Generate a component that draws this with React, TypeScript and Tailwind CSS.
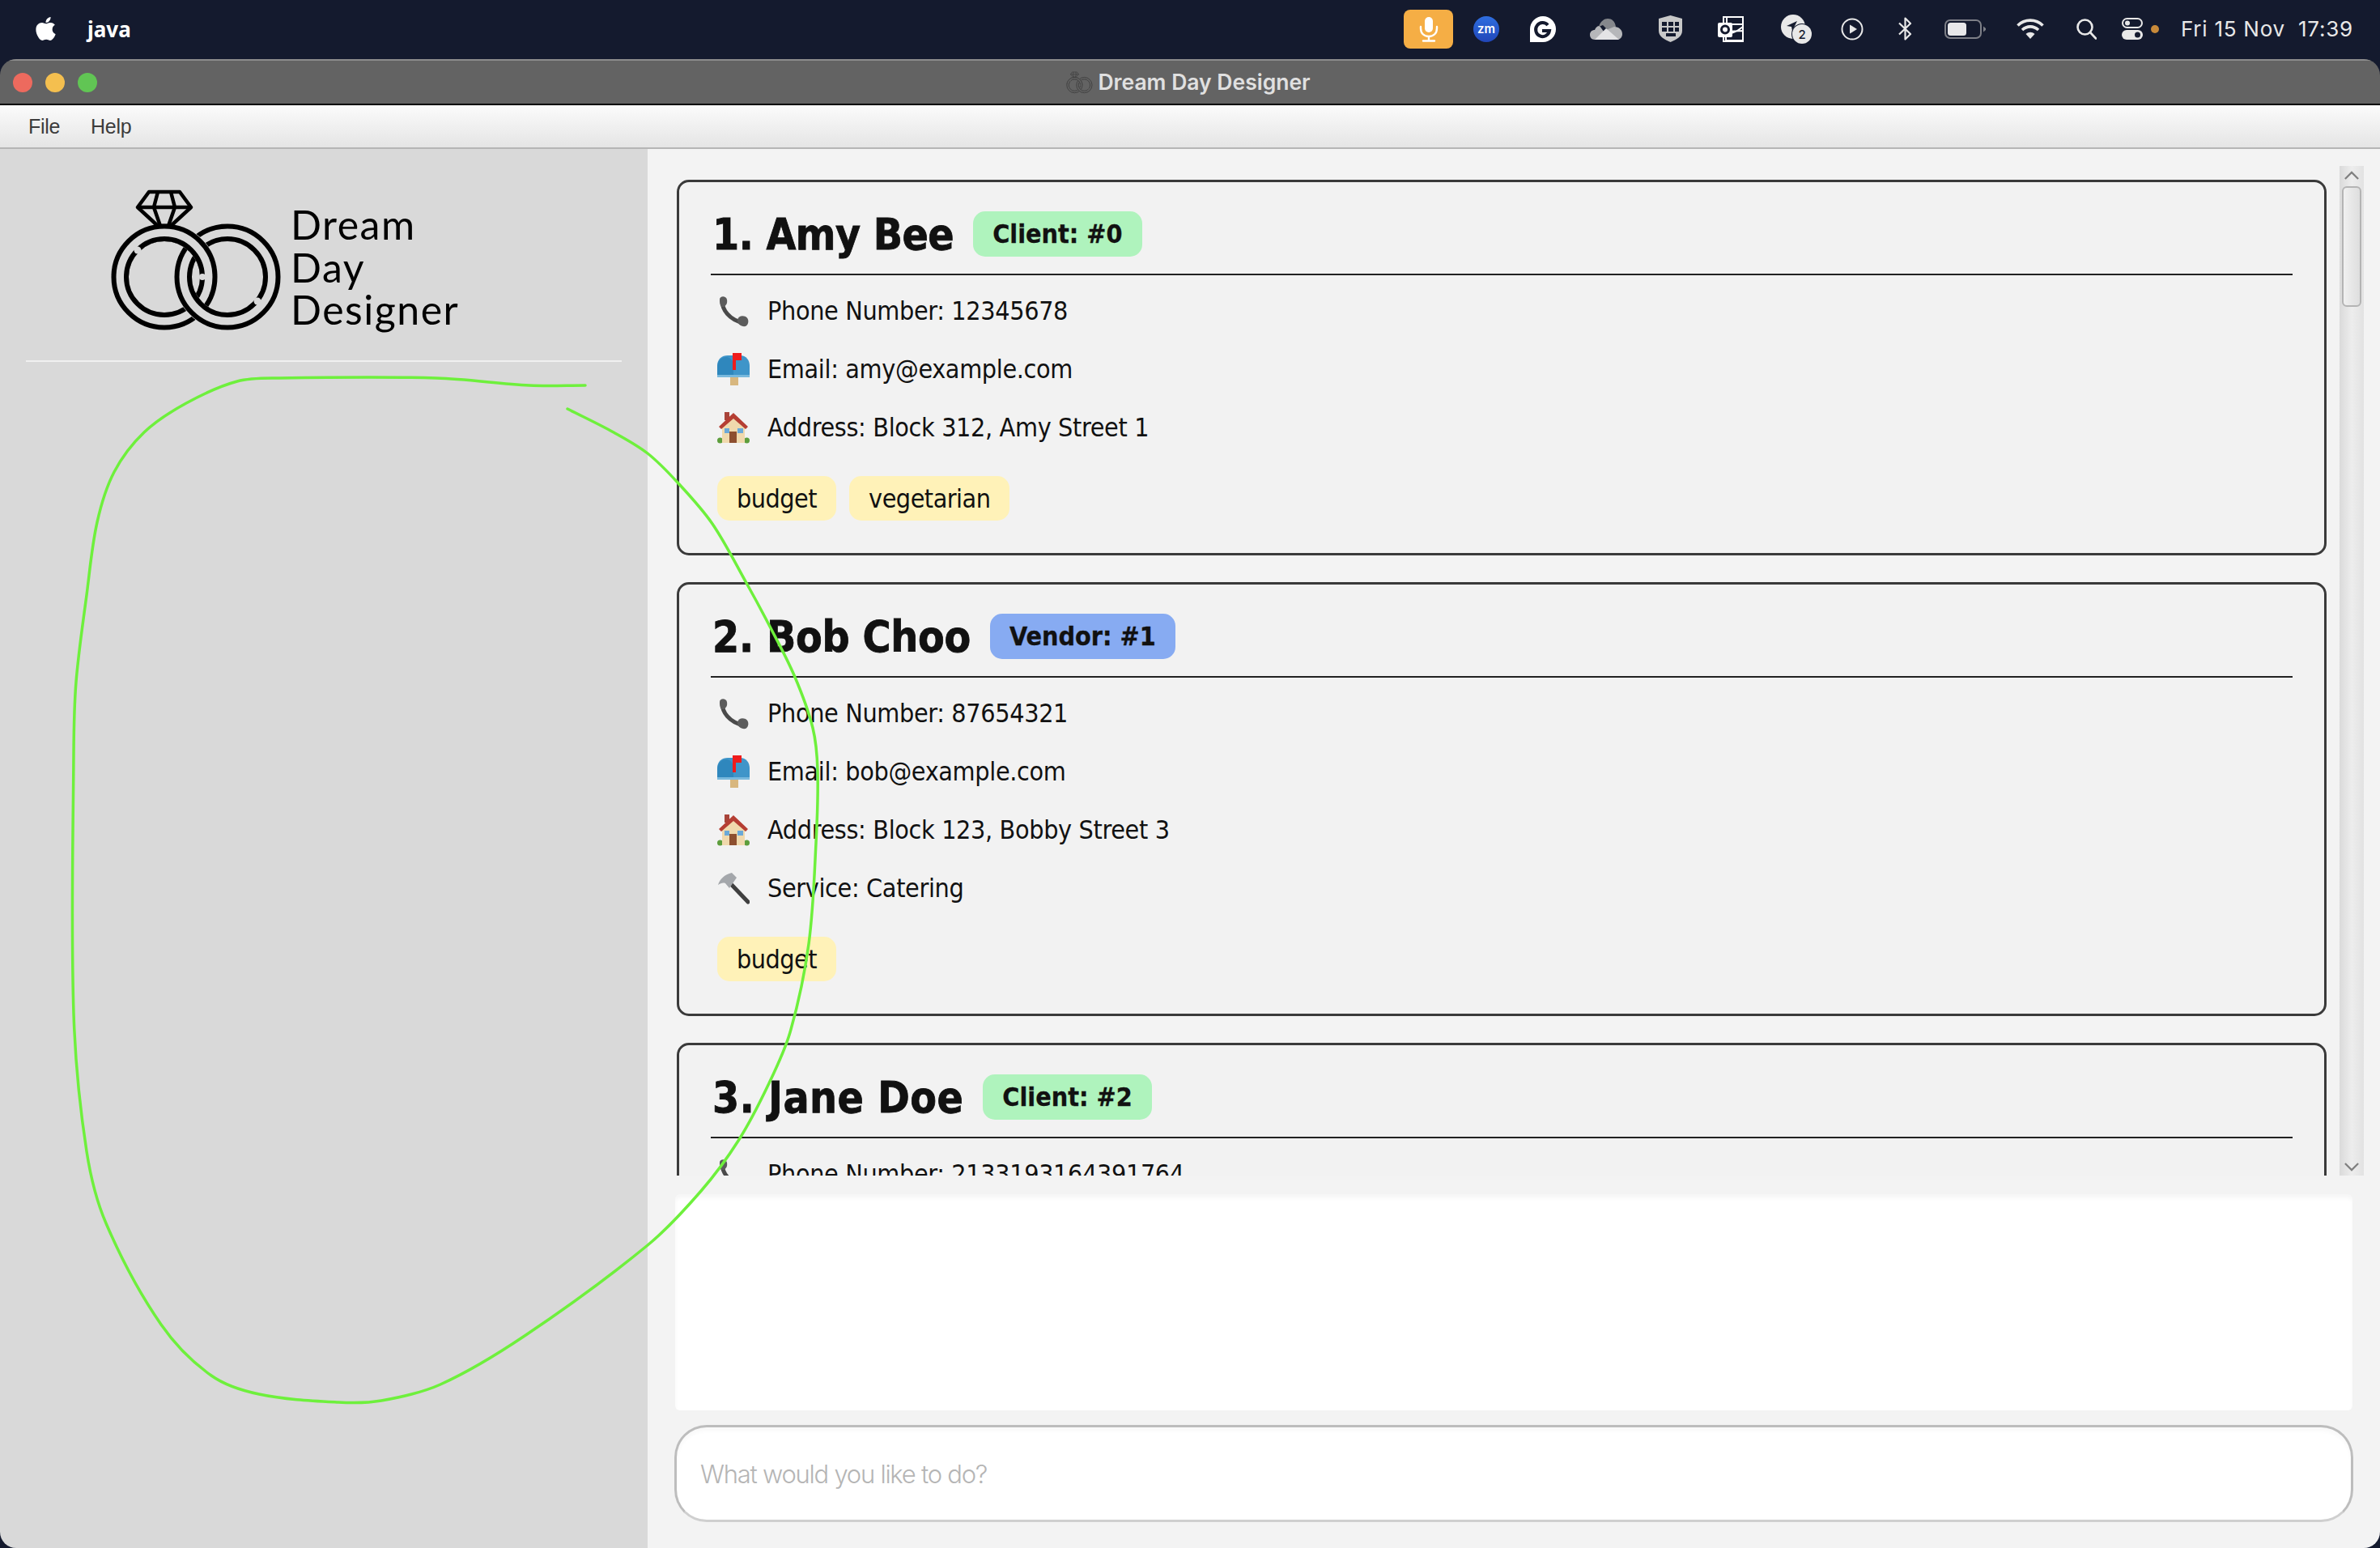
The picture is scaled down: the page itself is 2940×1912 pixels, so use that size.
import React from "react";
import { FaApple } from "react-icons/fa";

const CURVE: [number, number][] = [
  [723, 476], [654, 476], [539, 467], [345, 467], [293, 471], [230, 498], [178, 534], [141, 583], [120, 645],
  [107, 735], [94, 842], [91, 931], [91, 1252], [107, 1422], [131, 1511], [199, 1636], [261, 1699], [320, 1722],
  [418, 1732], [471, 1730], [544, 1710], [648, 1650], [800, 1538], [866, 1471], [912, 1409], [949, 1340],
  [976, 1275], [999, 1166], [1008, 1041], [1010, 952], [1004, 899], [981, 834], [949, 770], [922, 720],
  [880, 647], [838, 597], [800, 560], [758, 534], [701, 505],
];

function smooth(p: [number, number][]) {
  const dist = (a: [number, number], b: [number, number]) => Math.hypot(a[0] - b[0], a[1] - b[1]);
  const tangent = (i: number): [number, number] => {
    const a = p[Math.max(i - 1, 0)], c = p[Math.min(i + 1, p.length - 1)];
    const l = dist(a, c) || 1;
    return [(c[0] - a[0]) / l, (c[1] - a[1]) / l];
  };
  let d = `M${p[0][0]} ${p[0][1]}`;
  for (let i = 0; i < p.length - 1; i++) {
    const b = p[i], c = p[i + 1];
    const s = dist(b, c) / 3;
    const t0 = tangent(i), t1 = tangent(i + 1);
    d += ` C${b[0] + t0[0] * s} ${b[1] + t0[1] * s} ${c[0] - t1[0] * s} ${c[1] - t1[1] * s} ${c[0]} ${c[1]}`;
  }
  return d;
}

function RingLogo({ className, bg = "#d9d9d9", ink = "#000" }: { className: string; bg?: string; ink?: string }) {
  const ring = (cx: number) => (
    <>
      <circle cx={cx} cy={110} r={55} fill="none" stroke={bg} strokeWidth={22} />
      <circle cx={cx} cy={110} r={62.5} fill="none" stroke={ink} strokeWidth={6} />
      <circle cx={cx} cy={110} r={47} fill="none" stroke={ink} strokeWidth={6} />
    </>
  );
  return (
    <svg viewBox="0 0 215 180" className={className}>
      <defs>
        <clipPath id={`top-${ink.slice(1)}`}><rect x="0" y="0" width="215" height="108" /></clipPath>
      </defs>
      {ring(68)}
      {ring(146)}
      <g clipPath={`url(#top-${ink.slice(1)})`}>{ring(68)}</g>
      <circle cx="35" cy="77" r="4.5" fill={bg} />
      <circle cx="115" cy="110" r="4" fill={bg} />
      <circle cx="183" cy="140" r="4.5" fill={bg} />
      <g fill="none" stroke={ink} strokeWidth="4.5" strokeLinejoin="round">
        <path d="M49 5H87L101 24L76 47H60L35 24Z" />
        <path d="M35 24H101M60 5L55 24L63 47M76 5L81 24L73 47" />
      </g>
    </svg>
  );
}

function PhoneEmoji() {
  return (
    <svg viewBox="0 0 40 40" className="w-[40px] h-[40px] blur-[0.6px]">
      <path d="M6 7C6 18 14 31 33 35" fill="none" stroke="#4a4a4a" strokeWidth="5" />
      <path d="M3 6C3 1 11 1 12 6C13 12 10 13 9 15L5 15C3 12 3 9 3 6Z" fill="#5c5c5c" />
      <path d="M25 31C26 27 30 25 35 27C40 30 39 37 35 39C30 40 24 36 25 31Z" fill="#5c5c5c" />
    </svg>
  );
}
function MailEmoji() {
  return (
    <svg viewBox="0 0 40 40" className="w-[40px] h-[40px] blur-[0.5px]">
      <rect x="16" y="30" width="10" height="10" fill="#d8b77f" />
      <path d="M0 30V16C0 7 6 3 13 3H28C36 3 40 9 40 16V30Z" fill="#3f95c9" />
      <path d="M0 30V18C0 9 6 5 11 5C17 5 20 10 20 18V30Z" fill="#2f87bd" />
      <rect x="0" y="27" width="40" height="3" fill="#79b9dd" />
      <path d="M19 0H30V9H23V21H19Z" fill="#ef1c1c" />
    </svg>
  );
}
function HouseEmoji() {
  return (
    <svg viewBox="0 0 40 40" className="w-[40px] h-[40px] blur-[0.4px]">
      <rect x="9" y="1" width="6" height="10" fill="#a8443a" />
      <circle cx="3.500" cy="36" r="3.500" fill="#5d9e3c" />
      <circle cx="36.500" cy="36" r="3.500" fill="#5d9e3c" />
      <path d="M6 39V17L20 6L34 17V39Z" fill="#f0d9ad" />
      <path d="M2 19L20 2L38 19L35 22L20 9L5 22Z" fill="#b53e33" />
      <rect x="15" y="25" width="9" height="14" fill="#8d4f2f" />
      <rect x="9" y="21" width="6" height="6" fill="#6ba9d8" />
      <rect x="25" y="21" width="7" height="6" fill="#6ba9d8" />
    </svg>
  );
}
function HammerEmoji() {
  return (
    <svg viewBox="0 0 40 40" className="w-[40px] h-[40px] blur-[0.4px]">
      <path d="M17 15L38 37" fill="none" stroke="#3f3f3f" strokeWidth="5" strokeLinecap="round" />
      <path d="M1 16C3 9 9 3 18 1L24 7L15 20L10 14C7 13 4 14 1 16Z" fill="#a4a7ab" />
    </svg>
  );
}

function Row({ icon, text }: { icon: React.ReactNode; text: string }) {
  return (
    <div className="h-[72px] flex items-center pl-[8px]">
      <div className="w-[40px] h-[40px] shrink-0">{icon}</div>
      <span className="ml-[22px] text-[32px] tracking-[-0.35px] leading-none text-[#111]">{text}</span>
    </div>
  );
}

function Tag({ children }: { children: string }) {
  return (
    <span className="h-[55px] px-[24px] flex items-center rounded-[15px] bg-[#fff2b8] text-[32px] tracking-[-0.5px] text-[#111] leading-none">
      {children}
    </span>
  );
}

function Card({
  name, nameClass, badge, badgeClass, phone, email, address, service, tags,
}: {
  name: string; nameClass: string; badge: string; badgeClass: string; phone: string; email?: string; address?: string; service?: string; tags?: string[];
}) {
  return (
    <div className="ml-[2px] shrink-0 border-[3px] border-[#3a3a3a] rounded-[15px] bg-[#f2f2f2] px-[39px] pt-[36px] pb-[40px]">
      <div className="flex items-center h-[56px] pl-[2px]">
        <span className={`text-[53px] font-bold text-[#111] leading-none [-webkit-text-stroke:0.8px_#111] ${nameClass}`}>{name}</span>
        <span className={`ml-[24px] h-[56px] px-[24px] flex items-center rounded-[15px] text-[32px] font-bold text-[#111] leading-none [-webkit-text-stroke:0.3px_#111] ${badgeClass}`}>
          {badge}
        </span>
      </div>
      <div className="mt-[21px] h-[2px] bg-[#222]" />
      <div className="mt-[8px]">
        <Row icon={<PhoneEmoji />} text={`Phone Number: ${phone}`} />
        {email && <Row icon={<MailEmoji />} text={`Email: ${email}`} />}
        {address && <Row icon={<HouseEmoji />} text={`Address: ${address}`} />}
        {service && <Row icon={<HammerEmoji />} text={`Service: ${service}`} />}
      </div>
      {tags && (
        <div className="mt-[24px] flex gap-[16px] pl-[8px]">
          {tags.map((t) => <Tag key={t}>{t}</Tag>)}
        </div>
      )}
    </div>
  );
}

function StatusIcons() {
  return (
    <>
      <div className="w-[61px] h-[48px] rounded-[8px] bg-[#f5ae45] flex items-center justify-center">
        <svg viewBox="0 0 24 32" className="h-[32px] w-[24px]" fill="none" stroke="#fff" strokeWidth="2.4" strokeLinecap="round">
          <rect x="7" y="1" width="10" height="19" rx="5" fill="#fff" stroke="none" />
          <path d="M2 13V15C2 21 6 25 12 25C18 25 22 21 22 15V13M12 25V30M5 30.500H19" />
        </svg>
      </div>
      <div className="ml-[25px] w-[32px] h-[32px] rounded-full bg-gradient-to-b from-[#2f6ee0] to-[#2146b8] flex items-center justify-center">
        <span className="text-white text-[15px] font-semibold leading-none font-['Inter']">zm</span>
      </div>
      <svg viewBox="0 0 32 32" className="ml-[38px] w-[32px] h-[32px]">
        <path d="M16 0A16 16 0 1 1 16 32H0V16A16 16 0 0 1 16 0Z" fill="#fff" />
        <path d="M22 11A8.500 8.500 0 1 0 24 18H15" fill="none" stroke="#141a2e" strokeWidth="4" />
      </svg>
      <svg viewBox="0 0 40 26" className="ml-[42px] w-[40px] h-[26px]">
        <path d="M6 26C2 26 0 23 0 20C0 16 3 14 6 14C7 11 9 9 12 9L20 20L14 26Z" fill="#b6b7ba" />
        <path d="M11 10C13 3 18 0 22 0C27 0 31 3 32 10L24 16L16 8Z" fill="#85878c" />
        <path d="M30 10C36 10 40 14 40 19C40 23 37 26 34 26H24L20 14Z" fill="#b6b7ba" />
        <path d="M6 26L20 12L36 26Z" fill="#e4e4e6" />
      </svg>
      <svg viewBox="0 0 29 33" className="ml-[45px] w-[29px] h-[33px]">
        <path d="M14.500 0L29 4V19C29 26 22 30 14.500 33C7 30 0 26 0 19V4Z" fill="#c8c8c8" />
        <g fill="#141a2e">
          <rect x="4" y="8" width="6" height="5" /><rect x="12" y="8" width="6" height="5" /><rect x="20" y="8" width="5" height="5" />
          <rect x="4" y="15" width="6" height="5" /><rect x="12" y="15" width="6" height="5" /><rect x="20" y="15" width="5" height="5" />
          <rect x="9" y="22" width="12" height="4" />
        </g>
      </svg>
      <svg viewBox="0 0 32 32" className="ml-[44px] w-[32px] h-[32px]">
        <rect x="7" y="1" width="24" height="30" fill="#141a2e" stroke="#fff" strokeWidth="2" />
        <path d="M11 1H31V10H11Z" fill="#141a2e" stroke="#fff" strokeWidth="2" />
        <path d="M10 30V19L31 18V30ZM14 22L24 18L31 13" fill="none" stroke="#fff" strokeWidth="2" />
        <rect x="0" y="8" width="18" height="18" rx="2" fill="#fff" />
        <circle cx="9" cy="16.500" r="4.500" fill="none" stroke="#141a2e" strokeWidth="3" />
      </svg>
      <svg viewBox="0 0 40 36" className="ml-[46px] w-[40px] h-[36px]">
        <circle cx="15" cy="15" r="15" fill="#e8e8e8" />
        <path d="M7 14L20 8L14 20L13 15Z" fill="#141a2e" />
        <circle cx="26" cy="24" r="13" fill="#141a2e" />
        <circle cx="26" cy="24" r="12" fill="#e8e8e8" />
        <text x="26" y="29.500" textAnchor="middle" fontSize="15" fontWeight="500" fill="#141a2e" fontFamily="Inter, sans-serif">2</text>
      </svg>
      <svg viewBox="0 0 28 28" className="ml-[34px] w-[28px] h-[28px]">
        <circle cx="14" cy="14" r="12.500" fill="none" stroke="#e8e8e8" strokeWidth="2" />
        <path d="M11 8.500L20 14L11 19.500Z" fill="#e8e8e8" />
      </svg>
      <svg viewBox="0 0 17 29" className="ml-[43px] w-[17px] h-[29px]">
        <path d="M1 7.500L15 21L8.500 27.500V1.500L15 8L1 21.500" fill="none" stroke="#e8e8e8" strokeWidth="2.200" strokeLinejoin="round" />
      </svg>
      <svg viewBox="0 0 51 24" className="ml-[40px] w-[51px] h-[24px]">
        <rect x="1" y="1" width="44" height="22" rx="6" fill="none" stroke="#7d7f87" strokeWidth="2" />
        <rect x="4" y="4" width="23" height="16" rx="3.500" fill="#e8e8ea" />
        <path d="M48 8.500L51 11V13L48 15.500Z" fill="#7d7f87" />
      </svg>
      <svg viewBox="0 0 34 25" className="ml-[38px] w-[34px] h-[25px]" fill="none" stroke="#e8e8e8" strokeWidth="3.600">
        <path d="M1.500 8.500C10 0 24 0 32.500 8.500" />
        <path d="M7 14C13 8.500 21 8.500 27 14" />
        <path d="M17 25L11.500 19C15 16 19 16 22.500 19Z" fill="#e8e8e8" stroke="none" />
      </svg>
      <svg viewBox="0 0 25 26" className="ml-[40px] w-[25px] h-[26px]" fill="none" stroke="#e8e8e8" strokeWidth="2.600" strokeLinecap="round">
        <circle cx="10.500" cy="10.500" r="9" />
        <path d="M17 17L24 24.500" />
      </svg>
      <svg viewBox="0 0 26 27" className="ml-[31px] w-[26px] h-[27px]">
        <rect x="1" y="1" width="24" height="11" rx="5.500" fill="none" stroke="#e8e8e8" strokeWidth="2" />
        <circle cx="7" cy="6.500" r="3" fill="#e8e8e8" />
        <rect x="0" y="15" width="26" height="12" rx="6" fill="#e8e8e8" />
        <circle cx="19.500" cy="21" r="3.500" fill="#141a2e" />
      </svg>
      <div className="ml-[10px] w-[10px] h-[10px] rounded-full bg-[#c98a3a]" />
      <span className="ml-[27px] w-[209px] text-[26px] leading-none text-[#e8e8e8] whitespace-pre font-['Inter'] tracking-[0.75px]">Fri 15 Nov  17:39</span>
    </>
  );
}

export default function App() {
  return (
    <div className="relative w-[2940px] h-[1912px] overflow-hidden bg-[#141a2e] flex flex-col font-['DejaVu_Sans_Condensed','DejaVu_Sans',sans-serif]">
      <header className="h-[73px] shrink-0 flex items-center pl-[41px] pr-[37px] pb-[2px]">
        <FaApple className="text-white w-[31px] h-[33px]" />
        <span className="ml-[36px] text-[26px] font-bold text-white leading-none font-['Noto_Sans']">java</span>
        <div className="ml-auto flex items-center">
          <StatusIcons />
        </div>
      </header>

      <div className="flex-1 min-h-0 flex flex-col rounded-[20px] overflow-hidden">
        <div className="relative h-[57px] shrink-0 pr-[4px] bg-[#636363] border-t-[2px] border-t-[#8c8c8c] border-b-[2px] border-b-black flex items-center justify-center">
          <div className="absolute left-[16px] top-[15px] flex gap-[16px]">
            <span className="w-[24px] h-[24px] rounded-full bg-[#ed6a5e]" />
            <span className="w-[24px] h-[24px] rounded-full bg-[#f4bf4f]" />
            <span className="w-[24px] h-[24px] rounded-full bg-[#61c554]" />
          </div>
          <RingLogo className="w-[33px] h-[28px]" bg="#636363" ink="#3f3f3f" />
          <span className="ml-[6px] text-[26.500px] font-semibold text-[#e0e0e0] leading-none font-['Inter']">Dream Day Designer</span>
        </div>

        <div className="h-[54px] shrink-0 flex items-center pl-[35px] pt-[2px] gap-[38px] bg-gradient-to-b from-[#fbfbfb] to-[#e5e5e5] border-b-[2px] border-b-[#b5b5b5] text-[25px] tracking-[-0.3px] text-[#3c3c3c] font-['Liberation_Sans']">
          <span>File</span>
          <span>Help</span>
        </div>

        <main className="flex-1 min-h-0 flex">
          <aside className="w-[800px] shrink-0 bg-[#d9d9d9] flex flex-col">
            <div className="flex items-start pl-[135px] pt-[48px] h-[261px]">
              <RingLogo className="w-[215px] h-[180px]" />
              <div className="ml-[9px] pt-[19px] text-[50px] leading-[52.500px] tracking-[1.5px] text-black font-['Lato'] font-normal">
                <div>Dream</div>
                <div>Day</div>
                <div>Designer</div>
              </div>
            </div>
            <div className="mx-[32px] h-[2px] bg-[#f0f0f0]" />
          </aside>

          <section className="flex-1 min-w-0 bg-[#f3f3f3] flex flex-col pl-[34px] pr-[20px] pt-[21px]">
            <div className="h-[1247px] shrink-0 flex overflow-hidden">
              <div className="flex-1 min-w-0 flex flex-col gap-[33px] pt-[17px]">
                <Card
                  name="1. Amy Bee" nameClass="tracking-[-0.5px]" badge="Client: #0" badgeClass="bg-[#aff3bd]"
                  phone="12345678" email="amy@example.com" address="Block 312, Amy Street 1"
                  tags={["budget", "vegetarian"]}
                />
                <Card
                  name="2. Bob Choo" nameClass="tracking-[-0.3px]" badge="Vendor: #1" badgeClass="bg-[#87abf2]"
                  phone="87654321" email="bob@example.com" address="Block 123, Bobby Street 3" service="Catering"
                  tags={["budget"]}
                />
                <Card name="3. Jane Doe" nameClass="tracking-[0.45px]" badge="Client: #2" badgeClass="bg-[#aff3bd]" phone="2133193164391764" />
              </div>
              <div className="ml-[16px] w-[30px] shrink-0 flex flex-col items-center bg-gradient-to-r from-[#dadada] via-[#ededed] to-[#e2e2e2]">
                <svg viewBox="0 0 20 12" className="mt-[6px] w-[18px] h-[11px]" fill="none" stroke="#808080" strokeWidth="2.500">
                  <path d="M1 11L10 2L19 11" />
                </svg>
                <div className="mt-[8px] w-[24px] h-[149px] rounded-[6px] border-[2px] border-[#b4b4b4] bg-gradient-to-r from-[#f0f0f0] to-[#dedede]" />
                <svg viewBox="0 0 20 12" className="mt-auto mb-[5px] w-[18px] h-[11px]" fill="none" stroke="#808080" strokeWidth="2.500">
                  <path d="M1 1L10 10L19 1" />
                </svg>
              </div>
            </div>

            <div className="mt-[23px] w-[2072px] h-[267px] shrink-0 rounded-[6px] bg-white shadow-[inset_0_5px_4px_rgba(0,0,0,0.035)]" />

            <input
              readOnly
              placeholder="What would you like to do?"
              className="mt-[18px] ml-[-1px] w-[2074px] h-[120px] shrink-0 rounded-[40px] bg-white border-[3px] border-[#bdbdbd] border-b-[#cfcfcf] pl-[29px] text-[31px] font-light tracking-[-1.25px] outline-none placeholder:text-[#b5b5b5] font-['Inter'] shadow-[inset_0_5px_4px_rgba(0,0,0,0.025)]"
            />
          </section>
        </main>
      </div>

      <svg className="absolute left-0 top-0 w-[2940px] h-[1912px] pointer-events-none" viewBox="0 0 2940 1912" fill="none">
        <path d={smooth(CURVE)} stroke="#6ef03c" strokeWidth="3.500" strokeLinecap="round" />
      </svg>
    </div>
  );
}
